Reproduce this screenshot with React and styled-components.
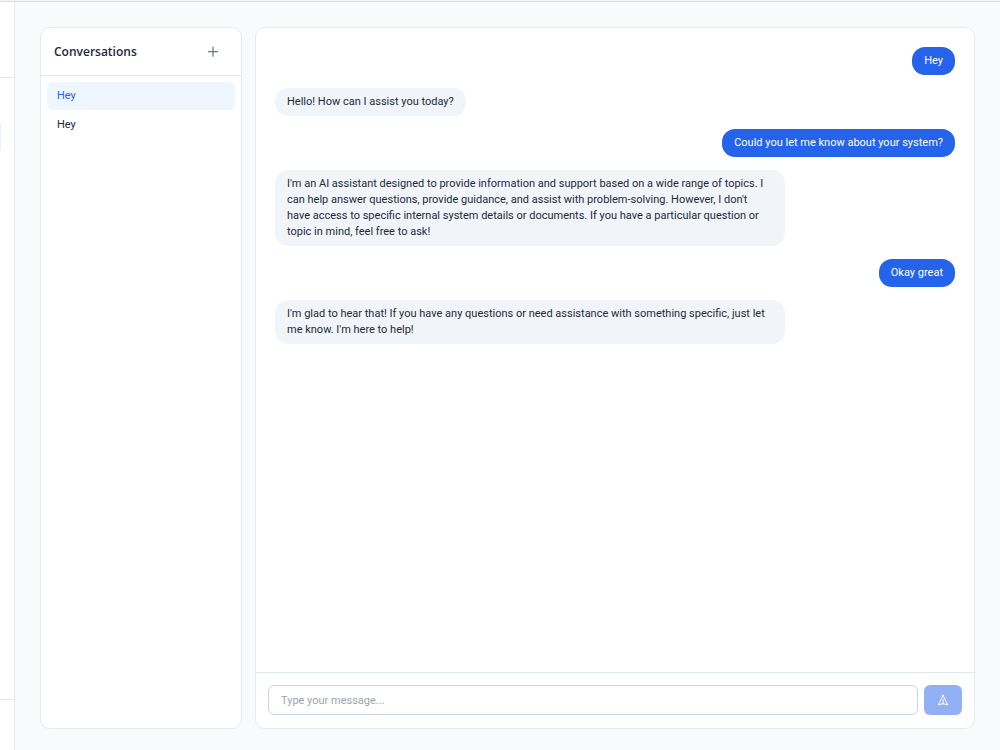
import React, { useState } from 'react';
import styled, { createGlobalStyle } from 'styled-components';

const GlobalStyle = createGlobalStyle`
  * { box-sizing: border-box; }
  body {
    margin: 0;
    background: #f8fafc;
    color: #1e293b;
    font-family: Roboto, 'Open Sans', sans-serif;
    font-size: 11px;
    line-height: 16px;
  }
  button, input { font: inherit; color: inherit; }
`;

const Page = styled.div`
  display: flex;
  flex-direction: column;
  min-height: 100vh;
`;

const TopEdge = styled.div`
  height: 2px;
  background: #f3f4f4;
  border-bottom: 1px solid #d9dcdf;
`;

const Body = styled.div`
  flex: 1;
  display: flex;
`;

const NavEdge = styled.nav`
  width: 15px;
  flex-shrink: 0;
  display: flex;
  flex-direction: column;
  background: #ffffff;
  border-right: 1px solid #e2e8f0;
`;

const NavHeader = styled.div`
  height: 76px;
  border-bottom: 1px solid #e2e8f0;
`;

const NavItems = styled.div`
  flex: 1;
  padding-top: 45px;
`;

const NavActive = styled.div`
  width: 1px;
  height: 27px;
  background: #e6f1fe;
`;

const NavFooter = styled.div`
  height: 51px;
  border-top: 1px solid #e2e8f0;
`;

const Main = styled.main`
  flex: 1;
  min-width: 0;
  display: flex;
  gap: 13px;
  padding: 25px 25px 21px;
`;

const Panel = styled.section`
  display: flex;
  flex-direction: column;
  background: #ffffff;
  border: 1px solid #e5eaf2;
  border-radius: 10px;
`;

const ListPanel = styled(Panel)`
  width: 202px;
  flex-shrink: 0;
`;

const ChatPanel = styled(Panel)`
  flex: 1;
  min-width: 0;
`;

const ListHeader = styled.header`
  display: flex;
  align-items: center;
  justify-content: space-between;
  height: 48px;
  padding: 0 18px 0 13px;
  border-bottom: 1px solid #e2e8f0;
`;

const Title = styled.h2`
  margin: 0;
  font-family: 'Open Sans', sans-serif;
  font-size: 12px;
  font-weight: 600;
  color: #1e293b;
`;

const IconButton = styled.button`
  display: grid;
  place-items: center;
  width: 20px;
  height: 20px;
  padding: 0;
  border: 0;
  background: none;
  color: #64748b;
`;

const List = styled.div`
  display: flex;
  flex-direction: column;
  gap: 1px;
  padding: 6px;
`;

const Conversation = styled.button`
  padding: 6px 10px;
  border: 0;
  border-radius: 6px;
  text-align: left;
  background: ${(p) => (p.$active ? '#eff6ff' : 'transparent')};
  color: ${(p) => (p.$active ? '#2563eb' : '#1e293b')};
`;

const Messages = styled.div`
  flex: 1;
  display: flex;
  flex-direction: column;
  align-items: flex-start;
  gap: 13px;
  padding: 19px;
`;

const Bubble = styled.div`
  max-width: 75%;
  padding: 6px 12px;
  border-radius: 13px;
  align-self: ${(p) => (p.$own ? 'flex-end' : 'flex-start')};
  background: ${(p) => (p.$own ? '#2563eb' : '#f1f5f9')};
  color: ${(p) => (p.$own ? '#ffffff' : '#1e293b')};
`;

const Composer = styled.form`
  display: flex;
  gap: 6px;
  padding: 12px 12px 13px;
  border-top: 1px solid #e2e8f0;
`;

const MessageInput = styled.input`
  flex: 1;
  min-width: 0;
  height: 30px;
  padding: 0 12px;
  border: 1px solid #cbd5e1;
  border-radius: 6px;
  background: #ffffff;
  &::placeholder { color: #9ca3af; opacity: 1; }
`;

const SendButton = styled.button`
  display: grid;
  place-items: center;
  width: 38px;
  height: 30px;
  padding: 0;
  border: 0;
  border-radius: 6px;
  background: #92b1f5;
  color: #ffffff;
`;

const conversations = ['Hey', 'Hey'];

const messages = [
  { own: true, text: 'Hey' },
  { text: 'Hello! How can I assist you today?' },
  { own: true, text: 'Could you let me know about your system?' },
  {
    text: "I'm an AI assistant designed to provide information and support based on a wide range of topics. I can help answer questions, provide guidance, and assist with problem-solving. However, I don't have access to specific internal system details or documents. If you have a particular question or topic in mind, feel free to ask!",
  },
  { own: true, text: 'Okay great' },
  {
    text: "I'm glad to hear that! If you have any questions or need assistance with something specific, just let me know. I'm here to help!",
  },
];

function PlusIcon() {
  return (
    <svg width="12" height="12" viewBox="0 0 12 12" fill="none" stroke="currentColor" strokeWidth="1.2" strokeLinecap="round" aria-hidden="true">
      <path d="M6 1.2v9M1.5 5.7h9" />
    </svg>
  );
}

function SendIcon() {
  return (
    <svg width="12" height="12" viewBox="0 0 12 12" fill="none" stroke="currentColor" strokeWidth="1" strokeLinejoin="round" strokeLinecap="round" aria-hidden="true">
      <path d="M6 1.2 1.3 10.8 6 9.7l4.7 1.1L6 1.2ZM6 9.7V5.4" />
    </svg>
  );
}

export default function App() {
  const [active, setActive] = useState(0);
  return (
    <>
      <GlobalStyle />
      <Page>
        <TopEdge />
        <Body>
          <NavEdge>
            <NavHeader />
            <NavItems>
              <NavActive />
            </NavItems>
            <NavFooter />
          </NavEdge>
          <Main>
            <ListPanel>
              <ListHeader>
                <Title>Conversations</Title>
                <IconButton type="button" aria-label="New conversation">
                  <PlusIcon />
                </IconButton>
              </ListHeader>
              <List>
                {conversations.map((name, i) => (
                  <Conversation key={i} type="button" $active={i === active} onClick={() => setActive(i)}>
                    {name}
                  </Conversation>
                ))}
              </List>
            </ListPanel>
            <ChatPanel>
              <Messages>
                {messages.map((m, i) => (
                  <Bubble key={i} $own={m.own}>
                    {m.text}
                  </Bubble>
                ))}
              </Messages>
              <Composer onSubmit={(e) => e.preventDefault()}>
                <MessageInput type="text" placeholder="Type your message..." aria-label="Message" />
                <SendButton type="submit" aria-label="Send">
                  <SendIcon />
                </SendButton>
              </Composer>
            </ChatPanel>
          </Main>
        </Body>
      </Page>
    </>
  );
}
